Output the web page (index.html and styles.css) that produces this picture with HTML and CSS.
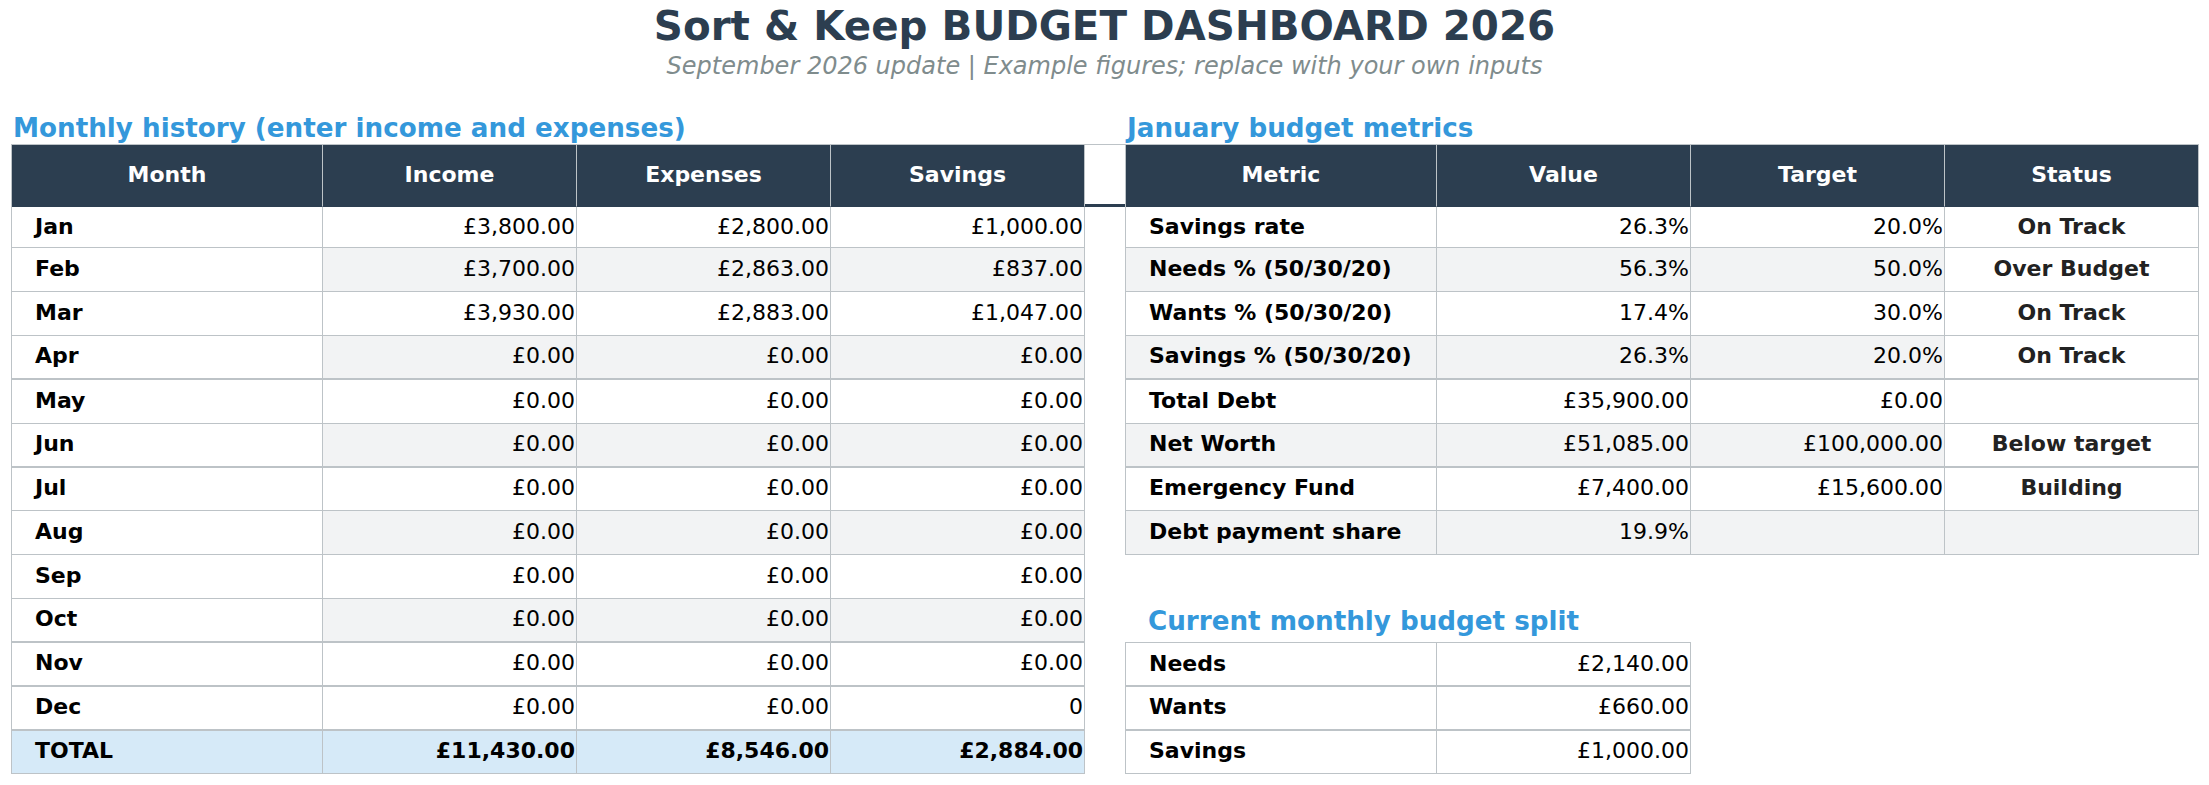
FILE: index.html
```html
<!DOCTYPE html>
<html lang="en">
<head>
<meta charset="utf-8">
<title>Sort &amp; Keep BUDGET DASHBOARD 2026</title>
<link rel="stylesheet" href="styles.css">
</head>
<body>
<header class="page-head">
  <h1 class="page-title">Sort &amp; Keep BUDGET DASHBOARD 2026</h1>
  <p class="page-subtitle">September 2026 update | Example figures; replace with your own inputs</p>
</header>

<main class="sheet">
  <section class="panel">
    <h2 class="panel-title">Monthly history (enter income and expenses)</h2>
    <div class="table table-4 history">
      <div class="row">
        <div class="cell head">Month</div><div class="cell head">Income</div><div class="cell head">Expenses</div><div class="cell head">Savings</div>
      </div>
      <div class="row">
        <div class="cell label">Jan</div><div class="cell num">£3,800.00</div><div class="cell num">£2,800.00</div><div class="cell num">£1,000.00</div>
      </div>
      <div class="row alt">
        <div class="cell label">Feb</div><div class="cell num">£3,700.00</div><div class="cell num">£2,863.00</div><div class="cell num">£837.00</div>
      </div>
      <div class="row">
        <div class="cell label">Mar</div><div class="cell num">£3,930.00</div><div class="cell num">£2,883.00</div><div class="cell num">£1,047.00</div>
      </div>
      <div class="row alt sep">
        <div class="cell label">Apr</div><div class="cell num">£0.00</div><div class="cell num">£0.00</div><div class="cell num">£0.00</div>
      </div>
      <div class="row">
        <div class="cell label">May</div><div class="cell num">£0.00</div><div class="cell num">£0.00</div><div class="cell num">£0.00</div>
      </div>
      <div class="row alt sep">
        <div class="cell label">Jun</div><div class="cell num">£0.00</div><div class="cell num">£0.00</div><div class="cell num">£0.00</div>
      </div>
      <div class="row">
        <div class="cell label">Jul</div><div class="cell num">£0.00</div><div class="cell num">£0.00</div><div class="cell num">£0.00</div>
      </div>
      <div class="row alt">
        <div class="cell label">Aug</div><div class="cell num">£0.00</div><div class="cell num">£0.00</div><div class="cell num">£0.00</div>
      </div>
      <div class="row">
        <div class="cell label">Sep</div><div class="cell num">£0.00</div><div class="cell num">£0.00</div><div class="cell num">£0.00</div>
      </div>
      <div class="row alt sep">
        <div class="cell label">Oct</div><div class="cell num">£0.00</div><div class="cell num">£0.00</div><div class="cell num">£0.00</div>
      </div>
      <div class="row sep">
        <div class="cell label">Nov</div><div class="cell num">£0.00</div><div class="cell num">£0.00</div><div class="cell num">£0.00</div>
      </div>
      <div class="row sep">
        <div class="cell label">Dec</div><div class="cell num">£0.00</div><div class="cell num">£0.00</div><div class="cell num">0</div>
      </div>
      <div class="row total">
        <div class="cell label">TOTAL</div><div class="cell num">£11,430.00</div><div class="cell num">£8,546.00</div><div class="cell num">£2,884.00</div>
      </div>
    </div>
  </section>

  <div class="gutter" aria-hidden="true"></div>

  <section class="panel">
    <h2 class="panel-title">January budget metrics</h2>
    <div class="table table-4 metrics">
      <div class="row">
        <div class="cell head">Metric</div><div class="cell head">Value</div><div class="cell head">Target</div><div class="cell head">Status</div>
      </div>
      <div class="row">
        <div class="cell label">Savings rate</div><div class="cell num">26.3%</div><div class="cell num">20.0%</div><div class="cell status">On Track</div>
      </div>
      <div class="row alt">
        <div class="cell label">Needs % (50/30/20)</div><div class="cell num">56.3%</div><div class="cell num">50.0%</div><div class="cell status">Over Budget</div>
      </div>
      <div class="row">
        <div class="cell label">Wants % (50/30/20)</div><div class="cell num">17.4%</div><div class="cell num">30.0%</div><div class="cell status">On Track</div>
      </div>
      <div class="row alt sep">
        <div class="cell label">Savings % (50/30/20)</div><div class="cell num">26.3%</div><div class="cell num">20.0%</div><div class="cell status">On Track</div>
      </div>
      <div class="row">
        <div class="cell label">Total Debt</div><div class="cell num">£35,900.00</div><div class="cell num">£0.00</div><div class="cell status"></div>
      </div>
      <div class="row alt sep">
        <div class="cell label">Net Worth</div><div class="cell num">£51,085.00</div><div class="cell num">£100,000.00</div><div class="cell status">Below target</div>
      </div>
      <div class="row">
        <div class="cell label">Emergency Fund</div><div class="cell num">£7,400.00</div><div class="cell num">£15,600.00</div><div class="cell status">Building</div>
      </div>
      <div class="row alt">
        <div class="cell label">Debt payment share</div><div class="cell num">19.9%</div><div class="cell num"></div><div class="cell status"></div>
      </div>
    </div>

    <h2 class="panel-title split-title">Current monthly budget split</h2>
    <div class="table split">
      <div class="row sep">
        <div class="cell label">Needs</div><div class="cell num">£2,140.00</div>
      </div>
      <div class="row sep">
        <div class="cell label">Wants</div><div class="cell num">£660.00</div>
      </div>
      <div class="row">
        <div class="cell label">Savings</div><div class="cell num">£1,000.00</div>
      </div>
    </div>
  </section>
</main>
</body>
</html>
```

FILE: styles.css
```css
* {
  box-sizing: border-box;
}

body {
  margin: 0;
  background: #ffffff;
  color: #000000;
  font-family: "DejaVu Sans", "Noto Sans", sans-serif;
}

.page-title {
  margin: 0;
  text-align: center;
  font-size: 40.4px;
  line-height: 52px;
  font-weight: 700;
  color: #2c3e50;
}

.page-subtitle {
  margin: 0;
  text-align: center;
  font-size: 24px;
  line-height: 28px;
  font-style: italic;
  color: #7f8c8d;
}

.sheet {
  display: flex;
  align-items: flex-start;
  margin: 32px 0 0 11px;
}

.panel {
  display: flex;
  flex-direction: column;
  width: 1074px;
}

.panel-title {
  margin: 0;
  padding-left: 2px;
  font-size: 26.2px;
  line-height: 32px;
  font-weight: 700;
  color: #3498db;
  white-space: nowrap;
}

.split-title {
  margin: 50px 0 5px;
  padding-left: 23px;
}

.gutter {
  flex: none;
  width: 40px;
  height: 63px;
  margin-top: 32px;
  border-top: 1px solid #bdc3c7;
  border-bottom: 3px solid #2c3e50;
}

.table {
  display: grid;
  border-top: 1px solid #bdc3c7;
  border-left: 1px solid #bdc3c7;
}

.table-4 {
  grid-template-columns: 311px repeat(3, 254px);
}

.history {
  grid-template-rows: 62px 41.4px repeat(12, 43.83px);
}

.metrics {
  grid-template-rows: 62px 41.4px repeat(7, 43.83px);
}

.split {
  width: 566px;
  grid-template-columns: 311px 254px;
  grid-template-rows: 43.9px 43.7px 43.4px;
}

.row {
  display: contents;
}

.cell {
  display: flex;
  align-items: center;
  min-width: 0;
  overflow: hidden;
  white-space: nowrap;
  font-size: 22px;
  padding-bottom: 2px;
  border-right: 1px solid #bdc3c7;
  border-bottom: 1px solid #bdc3c7;
  background: #ffffff;
}

.head {
  justify-content: center;
  background: #2c3e50;
  color: #ffffff;
  font-weight: 700;
  border-bottom-color: #2c3e50;
}

.label {
  padding-left: 23px;
  font-weight: 700;
}

.num {
  justify-content: flex-end;
  padding-right: 1px;
}

.status {
  justify-content: center;
  font-weight: 700;
  color: #222222;
}

.history .alt > .num,
.metrics .alt > .label,
.metrics .alt > .num,
.metrics .alt > .status:empty {
  background: #f2f3f4;
}

.sep > .cell {
  border-bottom-width: 2px;
}

.total > .cell {
  background: #d6eaf8;
  font-weight: 700;
}
```
